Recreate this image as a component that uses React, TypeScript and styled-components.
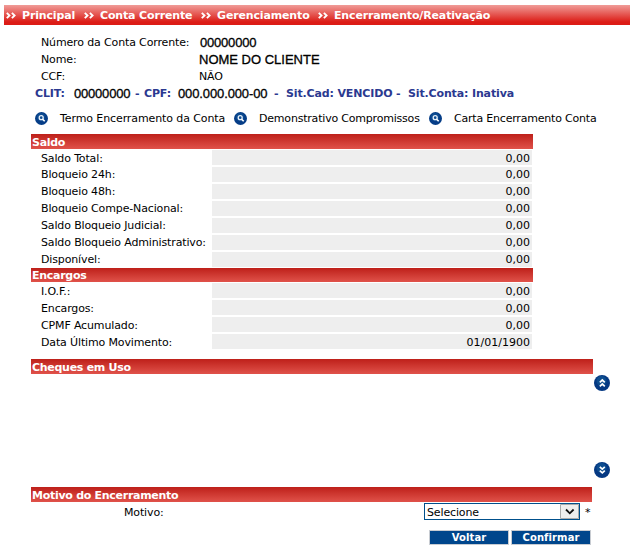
import React from "react";
import styled, { createGlobalStyle } from "styled-components";

const Global = createGlobalStyle`
  * { box-sizing: border-box; }
  body { margin: 0; background: #fff; color: #000; overflow: hidden;
    font: 11px/17px Verdana, "DejaVu Sans", sans-serif; }
`;
const Page = styled.main`width: 630px; height: 554px; padding-top: 5px; display: flex; flex-direction: column; overflow: hidden;`;
const Crumbs = styled.nav`
  height: 20px; flex: none; margin-left: 4px; padding-left: 2px; display: flex; color: #fff; font-weight: bold; line-height: 21px;
  background: linear-gradient(#f09c98, #dc1c16 85%);
`;
const Crumb = styled.span<{ $w: number }>`width: ${p => p.$w}px; display: flex; flex: none; white-space: nowrap; letter-spacing: -0.15px;`;
const Arrow = styled.svg`width: 12px; height: 20px; margin-right: 4px; flex: none;`;
const Info = styled.section`padding: 8.5px 0 0 41px; height: 60px; flex: none;`;
const InfoRow = styled.div`display: flex; height: 17px; white-space: nowrap;`;
const Label = styled.span<{ $w: number; $ls?: number }>`width: ${p => p.$w}px; flex: none; letter-spacing: ${p => p.$ls ?? -0.14}px;`;
const Plain = styled.span<{ $w?: number; $ls: number }>`
  font: 13px/17px "Liberation Sans", Arial, sans-serif; color: #000; letter-spacing: ${p => p.$ls}px;
  width: ${p => p.$w ? `${p.$w}px` : "auto"}; flex: none; -webkit-text-stroke: 0.3px #000;
`;
const Status = styled.div`height: 17px; flex: none; margin-left: 35px; display: flex; color: #2b3990; font-weight: bold; white-space: nowrap;`;
const Links = styled.div`display: flex; align-items: center; height: 14px; margin: 9px 0 9px 35px; flex: none; white-space: nowrap;`;
const LinkIcon = styled.svg`width: 13px; height: 13px; margin-right: 12px; flex: none;`;
const Heading = styled.h2<{ $w: number; $h?: number }>`
  width: ${p => p.$w}px; height: ${p => p.$h ?? 15}px; margin: 0 0 0 31px; padding-left: 1px; flex: none;
  font-size: 11px; line-height: ${p => (p.$h ?? 15) + 2}px; color: #fff; letter-spacing: -0.28px; background: linear-gradient(#be201a, #e0524a);
`;
const Table = styled.div`display: flex; flex-direction: column; gap: 2px; padding: 1px 0; flex: none;`;
const Row = styled.div<{ $lh: number }>`display: flex; height: 15px; padding-left: 41px; line-height: ${p => p.$lh}px; white-space: nowrap;`;
const Value = styled.span`width: 320px; padding-right: 2px; background: #eee; text-align: right;`;
const Cheques = styled.div`height: 113px; flex: none; padding: 1px 20px 9px 0; display: flex; flex-direction: column; justify-content: space-between; align-items: flex-end;`;
const Gap = styled.div`height: 9px; flex: none;`;
const ScrollIcon = styled.svg`width: 16px; height: 16px;`;
const Reason = styled.div`display: flex; height: 18px; margin: 1px 0 0 124px; line-height: 19px; flex: none;`;
const Select = styled.div`
  width: 156px; height: 17px; padding: 0 0 0 2px; border: 1px solid #00508c; display: flex; justify-content: space-between; line-height: 17px; letter-spacing: -0.14px;
`;
const Drop = styled.svg`width: 19px; height: 15px; flex: none;`;
const Star = styled.span`margin-left: 5px;`;
const Buttons = styled.div`display: flex; gap: 2px; margin: 9px 0 0 429px;`;
const Button = styled.button`
  width: 80px; height: 15px; border: 1px solid #c8ccd2; background: #00468c; color: #fff; padding: 0;
  font: bold 10px/14px Verdana, "DejaVu Sans", sans-serif; letter-spacing: 0.1px;
`;

const Arrows = () => <Arrow viewBox="0 0 12 20"><path d="M.8 7.8l2.7 2.7-2.7 2.7M5.9 7.8l2.7 2.7-2.7 2.7" fill="none" stroke="#fff" strokeWidth="1.9" /></Arrow>;
const Search = () => (
  <LinkIcon viewBox="0 0 13 13">
    <circle cx="6.5" cy="6.5" r="6.5" fill="#053d87" /><circle cx="6" cy="5" r="4" fill="#135797" opacity=".6" />
    <circle cx="6.2" cy="5.7" r="2" fill="none" stroke="#e8f0fa" strokeWidth="1.3" /><path d="M7.6 7.2l2.1 2.1" stroke="#fff" strokeWidth="1.6" />
  </LinkIcon>
);
const Scroll = ({ down = false }: { down?: boolean }) => (
  <ScrollIcon viewBox="0 0 16 16">
    <circle cx="8" cy="8" r="8" fill="#053983" /><circle cx="7.5" cy="6" r="5" fill="#125b98" opacity=".6" />
    <path d={down ? "M5.8 4.8l2.5 2.3 2.5-2.3M5.8 8.6l2.5 2.3 2.5-2.3" : "M5.8 7.3L8.3 5l2.5 2.3M5.8 11.3L8.3 9l2.5 2.3"} fill="none" stroke="#fff" strokeWidth="1.7" />
  </ScrollIcon>
);

const crumbs: [string, number][] = [["Principal", 78], ["Conta Corrente", 117], ["Gerenciamento", 117], ["Encerramento/Reativação", 220]];
const saldo = ["Saldo Total:", "Bloqueio 24h:", "Bloqueio 48h:", "Bloqueio Compe-Nacional:", "Saldo Bloqueio Judicial:", "Saldo Bloqueio Administrativo:", "Disponível:"];
const encargos = [["I.O.F.:", "0,00"], ["Encargos:", "0,00"], ["CPMF Acumulado:", "0,00"], ["Data Último Movimento:", "01/01/1900"]];

export default function App() {
  return (
    <><Global /><Page>
      <Crumbs>{crumbs.map(([t, w]) => <Crumb key={t} $w={w}><Arrows />{t}</Crumb>)}</Crumbs>
      <Info>
        <InfoRow><Label $w={159}>Número da Conta Corrente:</Label><Plain $ls={-0.2}>00000000</Plain></InfoRow>
        <InfoRow><Label $w={158}>Nome:</Label><Plain $ls={0}>NOME DO CLIENTE</Plain></InfoRow>
        <InfoRow><Label $w={158}>CCF:</Label><Label $w={60}>NÃO</Label></InfoRow>
      </Info>
      <Status>
        <Label $w={39}>CLIT:</Label><Plain $w={61} $ls={-0.2}>00000000</Plain><Label $w={9}>-</Label><Label $w={34}>CPF:</Label>
        <Plain $w={96} $ls={-0.12}>000.000.000-00</Plain><Label $w={12}>-</Label><Label $w={122}>Sit.Cad: VENCIDO -</Label><Label $w={120}>Sit.Conta: Inativa</Label>
      </Status>
      <Links>
        <Search /><Label $w={174} $ls={-0.1}>Termo Encerramento da Conta</Label>
        <Search /><Label $w={170} $ls={-0.2}>Demonstrativo Compromissos</Label>
        <Search /><Label $w={150} $ls={-0.2}>Carta Encerramento Conta</Label>
      </Links>
      <Heading $w={502}>Saldo</Heading>
      <Table>{saldo.map((t, i) => <Row key={t} $lh={i === 0 ? 17 : 16}><Label $w={171}>{t}</Label><Value>0,00</Value></Row>)}</Table>
      <Heading $w={502} $h={14}>Encargos</Heading>
      <Table>{encargos.map(([t, v]) => <Row key={t} $lh={17}><Label $w={171}>{t}</Label><Value>{v}</Value></Row>)}</Table>
      <Gap />
      <Heading $w={562}>Cheques em Uso</Heading>
      <Cheques><Scroll /><Scroll down /></Cheques>
      <Heading $w={561}>Motivo do Encerramento</Heading>
      <Reason>
        <Label $w={300}>Motivo:</Label>
        <Select>Selecione<Drop viewBox="0 0 19 15"><path d="M.5 .5h18v14H.5z" fill="#eee" stroke="#aaa" /><path d="M6 5.5l3.8 3.8 3.8-3.8" fill="none" stroke="#111" strokeWidth="1.8" /></Drop></Select>
        <Star>*</Star>
      </Reason>
      <Buttons><Button>Voltar</Button><Button>Confirmar</Button></Buttons>
    </Page></>
  );
}
